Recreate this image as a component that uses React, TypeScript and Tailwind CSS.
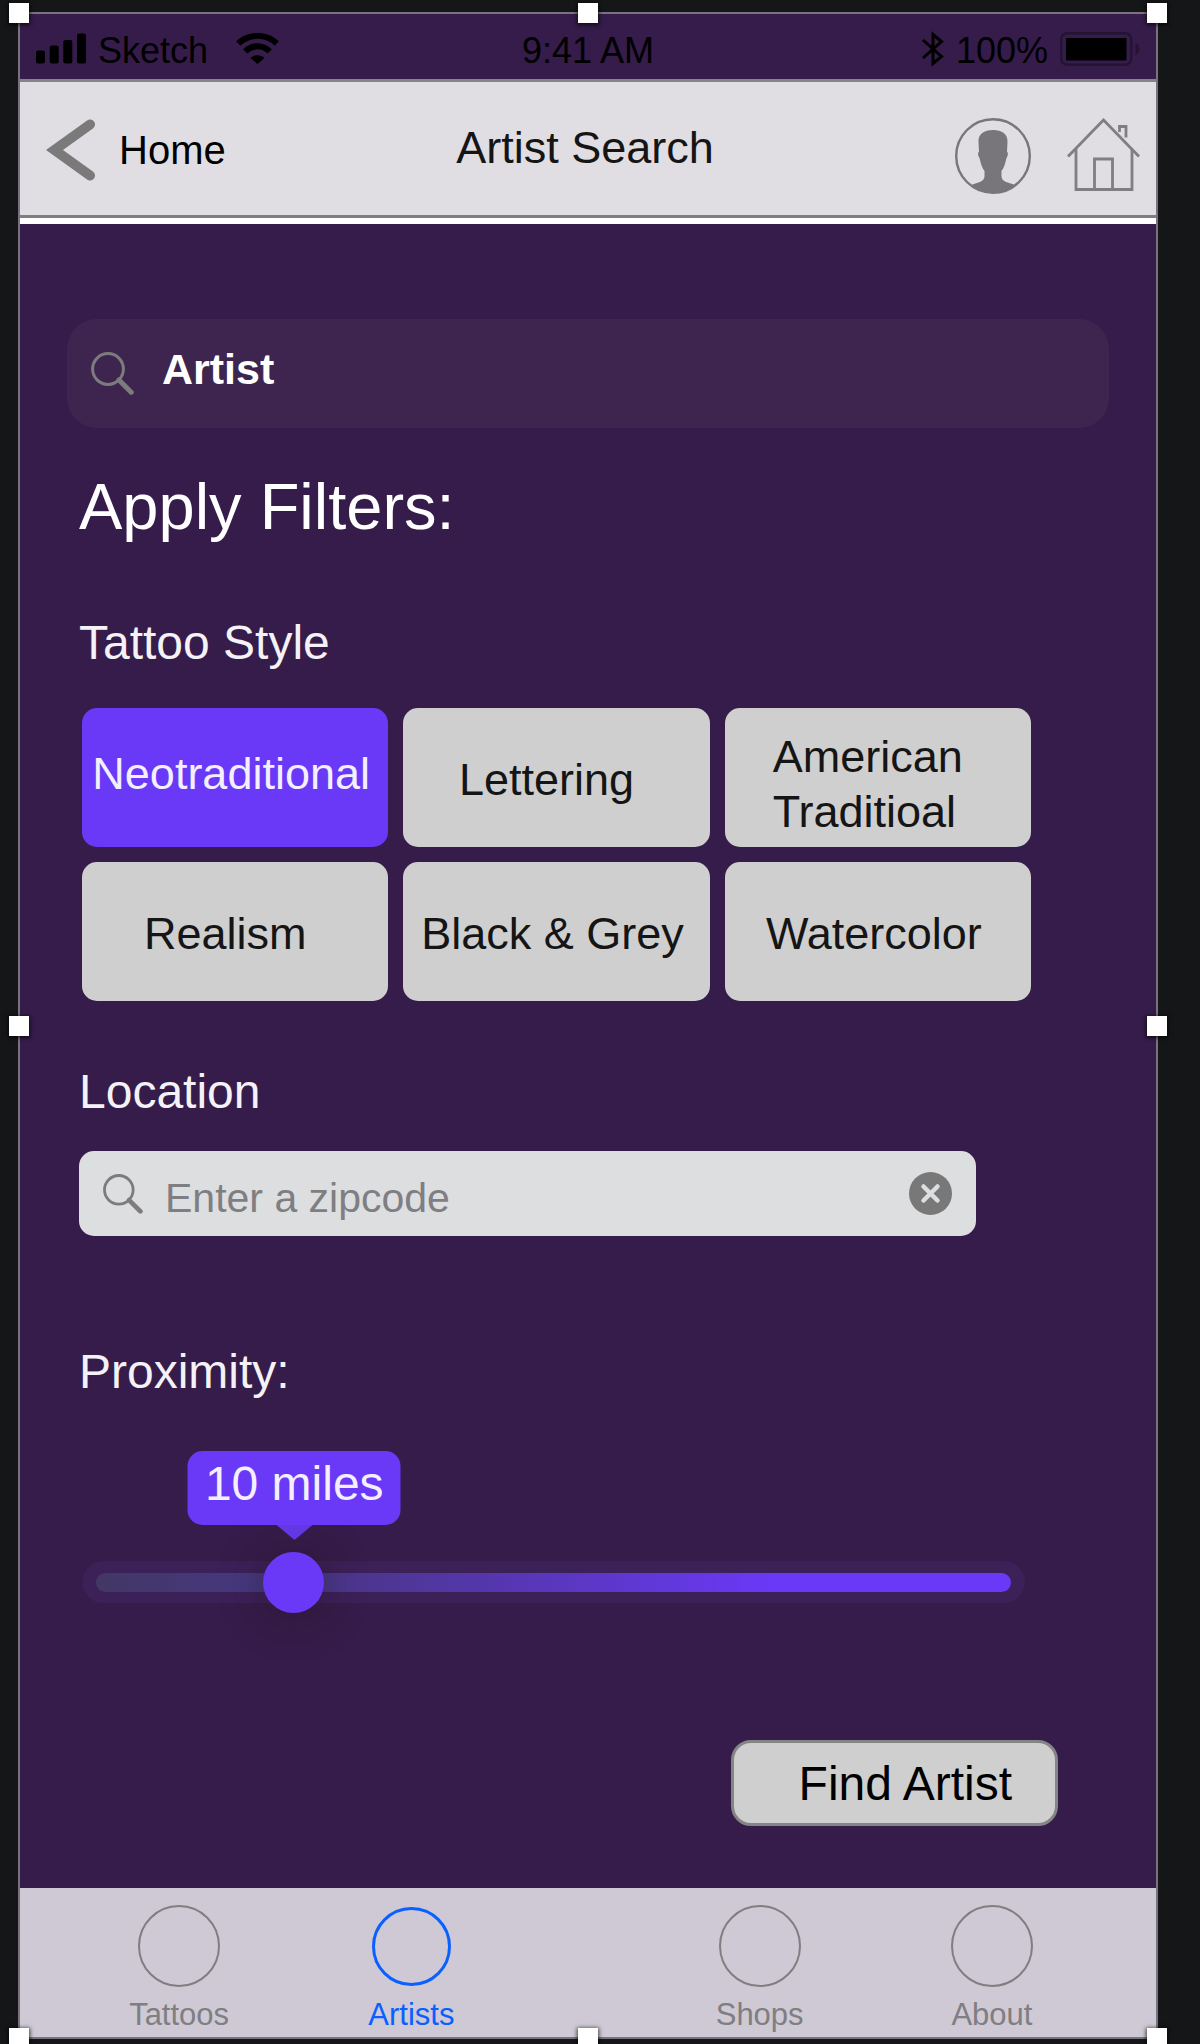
import { useState } from "react";

const styles = [
  { name: "Neotraditional", pad: "pr-2 pb-2" },
  { name: "Lettering", pad: "pr-5 pt-1" },
  { name: "American Traditioal", pad: "pl-12 pt-3" },
  { name: "Realism", pad: "pr-5 pt-1" },
  { name: "Black & Grey", pad: "pr-2 pt-1" },
  { name: "Watercolor", pad: "pr-2 pt-1" },
];

const handles = [
  "-left-[11px] -top-[11px]",
  "left-1/2 -translate-x-1/2 -top-[11px]",
  "-right-[11px] -top-[11px]",
  "-left-[11px] top-1/2 -translate-y-1/2",
  "-right-[11px] top-1/2 -translate-y-1/2",
  "-left-[11px] -bottom-[11px]",
  "left-1/2 -translate-x-1/2 -bottom-[11px]",
  "-right-[11px] -bottom-[11px]",
];

function SearchIcon({ className }: { className: string }) {
  return (
    <svg viewBox="0 0 43 43" className={className} fill="none" stroke="#7d7b7e" aria-hidden="true">
      <circle cx="17" cy="17" r="15.4" strokeWidth="3" />
      <path d="M28 28 L40.200 40.200" strokeWidth="5" strokeLinecap="round" />
    </svg>
  );
}

function StatusBar() {
  return (
    <div className="grid h-[65px] grid-cols-[1fr_auto_1fr] items-center px-4 pt-1 text-[36px] leading-[40px] text-black">
      <div className="flex items-center">
        <svg viewBox="0 0 50 31" className="h-[31px] w-[50px]" aria-hidden="true">
          <rect x="0" y="17.500" width="9" height="13" rx="2" />
          <rect x="13.700" y="12.500" width="9" height="18" rx="2" />
          <rect x="27.300" y="7" width="9" height="23.500" rx="2" />
          <rect x="41" y="0.500" width="9" height="30" rx="2" />
        </svg>
        <span className="ml-3 pt-1">Sketch</span>
        <svg viewBox="0 0 43 31" className="ml-7 h-[31px] w-[43px]" fill="none" stroke="#000" aria-hidden="true">
          <path d="M2.200 10.500 C13 0.300 30 0.300 40.800 10.500" strokeWidth="6" />
          <path d="M9.300 18.500 C16 11.600 27 11.600 33.700 18.500" strokeWidth="6" />
          <path d="M14.500 25 C18.500 21.200 24.500 21.200 28.500 25 L21.500 31 Z" fill="#000" stroke="none" />
        </svg>
      </div>
      <span className="pt-1">9:41 AM</span>
      <div className="flex items-center justify-end">
        <svg viewBox="0 0 22 36" className="h-9 w-[22px]" fill="none" stroke="#000" strokeWidth="3" aria-hidden="true">
          <path d="M1 9 L19.500 25.500 L11 32.500 V3.500 L19.500 10.500 L1 27" />
        </svg>
        <span className="ml-3 pt-1">100%</span>
        <svg viewBox="0 0 80 34" className="ml-3 h-[34px] w-20" aria-hidden="true">
          <rect x="1.200" y="1.200" width="70" height="31.500" rx="6" fill="none" stroke="#221432" strokeWidth="2.400" />
          <rect x="6" y="6" width="60.500" height="22.500" fill="#000" />
          <path d="M75.500 11.500 C80.500 13 80.500 21.500 75.500 23 Z" fill="#221432" />
        </svg>
      </div>
    </div>
  );
}

function NavBar() {
  return (
    <header className="grid h-[145px] grid-cols-[1fr_auto_1fr] items-center border-b-[6px] border-t-[3px] border-b-white border-t-[#858487] bg-[#e0dee3] pl-[26px] pr-4 shadow-[inset_0_-3px_0_#7f7d81]">
      <a href="#home" className="flex items-center text-[40px] leading-[48px] text-black">
        <svg viewBox="0 0 49 62" className="h-[62px] w-[49px]" fill="none" aria-hidden="true">
          <path d="M44 5.500 L8.500 31 L44 56.500" stroke="#7a7a7a" strokeWidth="10" strokeLinecap="round" strokeMiterlimit="6" />
        </svg>
        <span className="ml-6">Home</span>
      </a>
      <h1 className="pb-1 pr-4 text-[45px] leading-[52px] text-[#151515]">Artist Search</h1>
      <div className="flex items-start justify-end gap-9 pt-3">
        <button type="button" aria-label="Profile">
          <svg viewBox="0 0 76 76" className="size-[76px]" aria-hidden="true">
            <circle cx="38" cy="38" r="36.800" fill="none" stroke="#78767b" strokeWidth="2.400" />
            <path
              d="M38 12 C29 12 23 16 23.500 24 L24 34 C22.500 34 23 38 24.500 40 C26 46 27 50 29.500 53 V58 C29.500 64 23 64 16.500 67 C22 72 30 75 38 75 C46 75 54 72 60 67 C53 64 46.500 64 46.500 58 V53 C49 50 50 46 51.500 40 C53 38 53.500 34 52 34 L52.500 24 C53 16 47 12 38 12 Z"
              fill="#78767b"
            />
          </svg>
        </button>
        <button type="button" aria-label="Home screen">
          <svg viewBox="0 0 73 73" className="size-[73px]" fill="none" stroke="#7f7e81" strokeWidth="2.800" aria-hidden="true">
            <path d="M1 38.500 L36.500 2 L72 38.500" />
            <path d="M9 31 V71.500 H65 V31" />
            <path d="M27.500 71 V41 H45.500 V71" />
            <path d="M52.500 14 V8.500 H59 V19.500" />
          </svg>
        </button>
      </div>
    </header>
  );
}

function TabItem({ label, active = false, column }: { label: string; active?: boolean; column: string }) {
  return (
    <a
      href={"#" + label.toLowerCase()}
      aria-current={active ? "page" : undefined}
      className={`flex flex-col items-center text-[31px] leading-[32px] ${column} ${active ? "text-[#0a60ff]" : "text-[#7f7e81]"}`}
    >
      <span className="flex size-[82px] items-center justify-center">
        <span className={`rounded-full border-current ${active ? "size-[79px] border-3" : "size-[82px] border-2"}`} />
      </span>
      <span className="mt-3">{label}</span>
    </a>
  );
}

export default function App() {
  const [artist, setArtist] = useState("Artist");
  const [zip, setZip] = useState("");
  const [selected, setSelected] = useState("Neotraditional");
  const [miles, setMiles] = useState(10);
  const percent = (miles / 51) * 100;

  return (
    <div className="min-h-screen overflow-hidden bg-[#151617] pb-[5px] pl-[18px] pr-[42px] pt-3 font-['Liberation_Sans',Arial,sans-serif]">
      <div className="relative border-2 border-[#7b7281] bg-[#351c4a]">
        <StatusBar />
        <NavBar />

        <main className="pb-[62px] pt-[95px]">
          <label className="ml-[47px] mr-[47px] flex h-[109px] items-center rounded-[30px] bg-[#3e254f] pl-6 pr-6">
            <SearchIcon className="size-[43px] shrink-0" />
            <input
              type="text"
              aria-label="Artist name"
              value={artist}
              onChange={(e) => setArtist(e.target.value)}
              className="ml-7 min-w-0 flex-1 bg-transparent pb-2.5 text-[43px] font-bold leading-[48px] text-white outline-none"
            />
          </label>

          <h2 className="ml-[59px] mt-[43px] text-[65px] leading-[72px] text-white">Apply Filters:</h2>

          <h3 className="ml-[59px] mt-[72px] text-[48px] leading-[56px] text-[#f4f2f6]">Tattoo Style</h3>
          <div className="ml-[62px] mr-[125px] mt-[37px] grid grid-cols-3 gap-[15px]">
            {styles.map((s) => (
              <button
                key={s.name}
                type="button"
                aria-pressed={selected === s.name}
                onClick={() => setSelected(s.name)}
                className={`flex h-[139px] items-center justify-center rounded-[15px] text-[45px] leading-[55px] ${s.pad} ${
                  selected === s.name ? "bg-[#6939f7] text-[#f3efff]" : "bg-[#cfcfcf] text-[#151515]"
                } ${s.name.startsWith("American") ? "text-left" : "text-center"}`}
              >
                {s.name}
              </button>
            ))}
          </div>

          <h3 className="ml-[59px] mt-[63px] text-[48px] leading-[56px] text-[#f4f2f6]">
            <label htmlFor="zip">Location</label>
          </h3>
          <div className="ml-[59px] mr-[180px] mt-[31px] flex h-[85px] items-center rounded-[15px] bg-[#dcdee0] pl-6 pr-6">
            <SearchIcon className="size-10 shrink-0" />
            <input
              id="zip"
              type="text"
              placeholder="Enter a zipcode"
              value={zip}
              onChange={(e) => setZip(e.target.value)}
              className="ml-[22px] min-w-0 flex-1 bg-transparent pt-2 text-[41px] leading-[48px] text-[#333] outline-none placeholder:text-[#7f7e82]"
            />
            <button type="button" aria-label="Clear zipcode" onClick={() => setZip("")}>
              <svg viewBox="0 0 43 43" className="size-[43px]" aria-hidden="true">
                <circle cx="21.500" cy="21.500" r="21.500" fill="#787878" />
                <path d="M14.500 14.500 L28.500 28.500 M28.500 14.500 L14.500 28.500" stroke="#dcdee0" strokeWidth="4.500" strokeLinecap="round" />
              </svg>
            </button>
          </div>

          <h3 className="ml-[59px] mt-[108px] text-[48px] leading-[56px] text-[#f4f2f6]">
            <label htmlFor="proximity">Proximity:</label>
          </h3>
          <div className="relative ml-[62px] mr-[131px] mt-[51px] pt-[110px]">
            <output
              htmlFor="proximity"
              className="absolute top-0 flex h-[74px] w-[213px] -translate-x-1/2 items-center justify-center rounded-[15px] bg-[#6939f7] pb-2 text-[48px] leading-[56px] text-[#f3efff]"
              style={{ left: `calc(${percent}% + ${45 - 0.9 * percent}px)` }}
            >
              {miles} miles
              <svg viewBox="0 0 36 15" className="absolute left-1/2 top-full h-[15px] w-9 -translate-x-1/2" aria-hidden="true">
                <path d="M0 0 H36 L18 15 Z" fill="#6237e4" />
              </svg>
            </output>
            <input
              id="proximity"
              type="range"
              min={0}
              max={51}
              value={miles}
              onChange={(e) => setMiles(Number(e.target.value))}
              className="block h-[42px] w-full appearance-none rounded-full bg-[#3c2058] px-3.5 outline-none [&::-webkit-slider-runnable-track]:h-[19px] [&::-webkit-slider-runnable-track]:rounded-full [&::-webkit-slider-runnable-track]:bg-[linear-gradient(90deg,#433765_0%,#463880_18%,#4e3694_32%,#5a37c0_51%,#6939f7_74%)] [&::-webkit-slider-thumb]:-mt-[21px] [&::-webkit-slider-thumb]:size-[61px] [&::-webkit-slider-thumb]:appearance-none [&::-webkit-slider-thumb]:rounded-full [&::-webkit-slider-thumb]:bg-[#6939f7] [&::-webkit-slider-thumb]:shadow-[0_2px_40px_rgba(32,20,24,0.5)]"
            />
          </div>

          <div className="mr-[98px] mt-[137px] flex justify-end">
            <button
              type="button"
              className="h-[86px] rounded-[20px] border-3 border-[#858585] bg-[#cfcfcf] pl-[65px] pr-[43px] pt-0.5 text-[48px] leading-[56px] text-black"
            >
              Find Artist
            </button>
          </div>
        </main>

        <nav className="grid h-[149px] grid-cols-[2fr_2fr_1fr_2fr_2fr] bg-[#cec9d5] pl-[43px] pr-12 pt-[17px]">
          <TabItem label="Tattoos" column="col-start-1" />
          <TabItem label="Artists" active column="col-start-2" />
          <TabItem label="Shops" column="col-start-4" />
          <TabItem label="About" column="col-start-5" />
        </nav>

        {handles.map((place) => (
          <span key={place} className={`absolute size-5 bg-white shadow-[0_1px_4px_1px_rgba(0,0,0,0.7)] ${place}`} />
        ))}
      </div>
    </div>
  );
}
